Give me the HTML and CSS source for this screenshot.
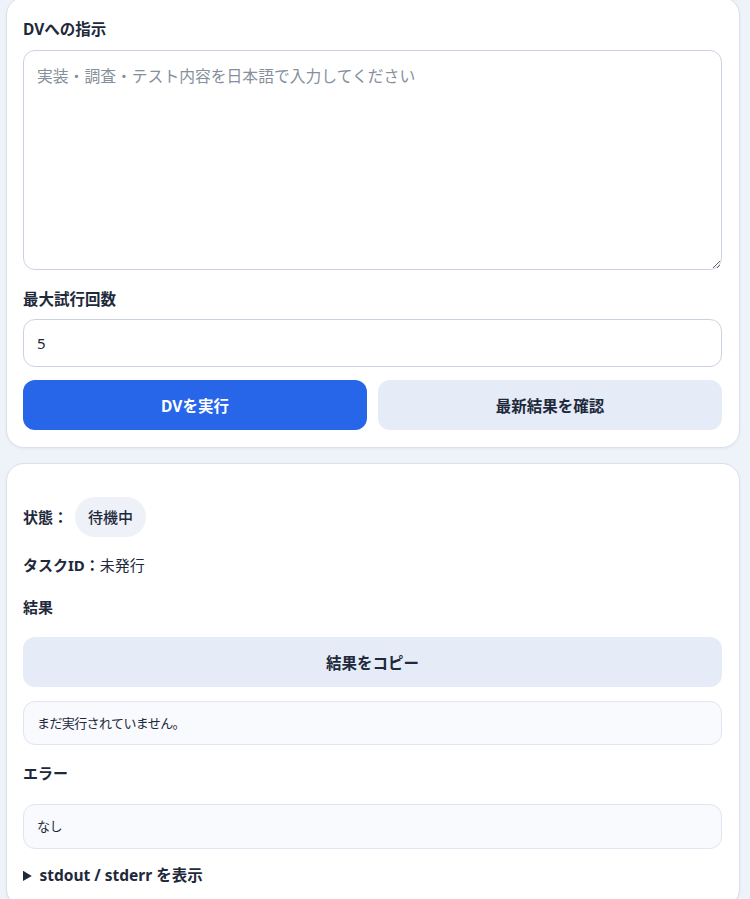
FILE: index.html
```html
<!DOCTYPE html>
<html lang="ja">
<head>
<meta charset="utf-8">
<title>DV</title>
<link rel="stylesheet" href="styles.css">
</head>
<body>
<main class="page">
  <section class="card card-form">
    <div class="field">
      <label class="label" for="instr">DVへの指示</label>
      <textarea id="instr" class="textarea" placeholder="実装・調査・テスト内容を日本語で入力してください"></textarea>
    </div>
    <div class="field">
      <label class="label" for="tries">最大試行回数</label>
      <input id="tries" class="input" type="text" value="5">
    </div>
    <div class="actions">
      <button class="btn btn-primary">DVを実行</button>
      <button class="btn btn-secondary">最新結果を確認</button>
    </div>
  </section>

  <section class="card card-result">
    <div class="status-row">
      <span class="key">状態：</span>
      <span class="pill">待機中</span>
    </div>
    <div class="task-row"><span class="key">タスクID：</span>未発行</div>
    <h3 class="heading">結果</h3>
    <button class="btn btn-secondary btn-block">結果をコピー</button>
    <div class="output">まだ実行されていません。</div>
    <h3 class="heading heading-error">エラー</h3>
    <div class="output output-error">なし</div>
    <details class="logs">
      <summary>stdout / stderr を表示</summary>
    </details>
  </section>
</main>
</body>
</html>
```

FILE: styles.css
```css
* { box-sizing: border-box; }

html, body {
  margin: 0;
  padding: 0;
  background: #eef2f9;
  height: 899px;
  overflow: hidden;
}

body {
  font-family: "Noto Sans", "Noto Sans CJK JP", sans-serif;
  color: #1e293b;
}

.page {
  padding: 0 10px 0 6px;
  display: flex;
  flex-direction: column;
  gap: 15px;
}

.card {
  background: #ffffff;
  border: 1px solid #d9e1ec;
  border-radius: 18px;
  padding: 20px 17px 17px 16px;
  box-shadow: 0 1px 3px rgba(30, 50, 90, 0.05);
}

.card-form {
  margin-top: -3px;
}

.field {
  display: flex;
  flex-direction: column;
  gap: 10px;
  margin-bottom: 18px;
}

.label {
  font-size: 15.5px;
  font-weight: 700;
  line-height: 22px;
  color: #1e293b;
}

.textarea {
  display: block;
  width: 100%;
  height: 220px;
  border: 1px solid #c9d3e0;
  border-radius: 12px;
  padding: 14px 13px;
  font-family: "Noto Sans", "Noto Sans CJK JP", sans-serif;
  font-size: 15.8px;
  line-height: 22px;
  color: #1e293b;
  resize: vertical;
}

.textarea::placeholder {
  color: #868f9c;
}

.input {
  display: block;
  width: 100%;
  height: 48px;
  border: 1px solid #c9d3e0;
  border-radius: 12px;
  padding: 0 13px;
  font-family: "Noto Sans", "Noto Sans CJK JP", sans-serif;
  font-size: 15px;
  color: #1e293b;
}

.field:nth-child(2) {
  margin-bottom: 13px;
}

.field:nth-child(2) .label {
  margin-bottom: -1px;
}

.actions {
  display: grid;
  grid-template-columns: 1fr 1fr;
  gap: 11px;
}

.btn {
  height: 50px;
  border: none;
  border-radius: 12px;
  font-family: "Noto Sans", "Noto Sans CJK JP", sans-serif;
  font-size: 15.5px;
  font-weight: 700;
  cursor: pointer;
}

.btn-primary {
  background: #2866e9;
  color: #ffffff;
}

.btn-secondary {
  background: #e5ecf7;
  color: #1e293b;
}

.btn-block {
  display: block;
  width: 100%;
  margin-top: 19px;
}

.card-result {
  padding-top: 33px;
  padding-bottom: 20px;
}

.status-row {
  display: flex;
  align-items: center;
  gap: 7px;
  font-size: 15px;
  line-height: 22px;
}

.key {
  font-weight: 700;
}

.pill {
  display: inline-flex;
  align-items: center;
  height: 40px;
  padding: 0 13px;
  border-radius: 999px;
  background: #eef1f8;
  font-weight: 500;
  font-size: 15px;
}

.task-row {
  margin-top: 17px;
  font-size: 15px;
  line-height: 22px;
}

.heading {
  margin: 20px 0 0;
  font-size: 15px;
  font-weight: 700;
  line-height: 22px;
}

.heading-error {
  margin-top: 17px;
}

.output {
  margin-top: 14px;
  min-height: 44px;
  padding: 11px 13px;
  border: 1px solid #e0e6ef;
  border-radius: 12px;
  background: #f8fafd;
  font-size: 13px;
  letter-spacing: -0.6px;
  line-height: 20px;
  color: #1e293b;
}

.output-error {
  margin-top: 20px;
  min-height: 45px;
}

.logs {
  margin-top: 15px;
  font-size: 15.5px;
  font-weight: 700;
  line-height: 22px;
}

.logs summary {
  cursor: pointer;
}
```
